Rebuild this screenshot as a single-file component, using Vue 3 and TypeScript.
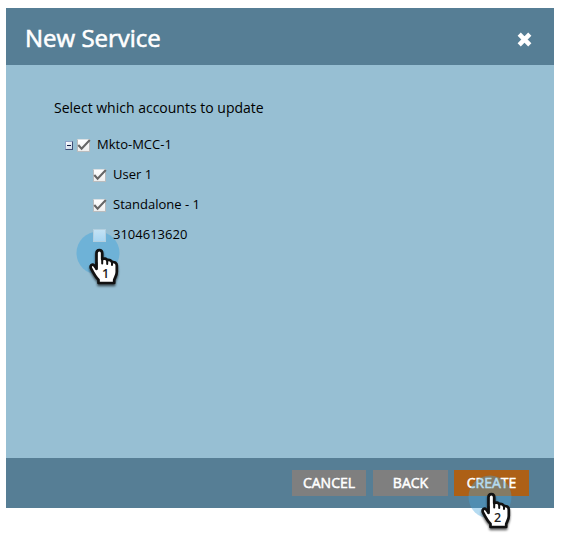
<script setup lang="ts">
import { ref } from 'vue'

interface Account {
  name: string
  checked: boolean
}

const root = ref<Account>({ name: 'Mkto-MCC-1', checked: true })
const accounts = ref<Account[]>([
  { name: 'User 1', checked: true },
  { name: 'Standalone - 1', checked: true },
  { name: '3104613620', checked: false },
])
const steps = [1, 2]
</script>

<template>
  <main class="page">
    <section class="dialog">
      <header class="head">
        <h1>New Service</h1>
        <svg class="close" viewBox="0 0 15 15" width="15" height="15">
          <path d="M2.2 2.2 12.8 12.8M12.8 2.2 2.2 12.8" />
        </svg>
      </header>

      <div class="body">
        <p class="prompt">Select which accounts to update</p>
        <div class="row root" @click="root.checked = !root.checked">
          <span class="toggle"></span>
          <span class="box">
            <svg v-if="root.checked" viewBox="0 0 15 15" width="15" height="15"><path d="M2.3 7 5.6 10.6 13.8 2" /></svg>
          </span>
          <span class="label">{{ root.name }}</span>
        </div>
        <div v-for="a in accounts" :key="a.name" class="row child" @click="a.checked = !a.checked">
          <span class="box" :class="{ empty: !a.checked }">
            <svg v-if="a.checked" viewBox="0 0 15 15" width="15" height="15"><path d="M2.3 7 5.6 10.6 13.8 2" /></svg>
          </span>
          <span class="label">{{ a.name }}</span>
        </div>
      </div>

      <footer class="foot">
        <button class="cancel"><span>CANCEL</span></button>
        <button class="back"><span>BACK</span></button>
        <button class="create"><span>CREATE</span></button>
      </footer>
    </section>

    <div v-for="n in steps" :key="n" class="pointer" :class="'p' + n">
      <svg viewBox="0 0 48 62" width="48" height="62">
        <circle cx="22" cy="22" r="21.5" />
        <path
          class="hand"
          d="M20.5 33V22.3C20.5 18 26.2 18 26.2 22.3V28.2C28 27 30.6 27.6 31.2 29.2C33.2 28.4 35.6 29.3 36 31.1C38.6 30.6 40.8 32 40.8 34.6V41C40.8 44.5 38.8 46.5 38.2 49V52H22.5V48.8C19.7 46.6 17.4 42 15 37.4C13.7 34.4 16.3 32.6 18.2 34.4L20.5 37.6Z"
        />
        <path class="crease" d="M26.2 27.5V32.4M31.2 29.5V33M36 31V34M20.5 32V38.3" />
        <text x="29.6" y="47.2">{{ n }}</text>
      </svg>
    </div>
  </main>
</template>

<style>
body {
  background: #fff;
}
</style>

<style scoped>
.page {
  position: relative;
  box-sizing: border-box;
  width: 563px;
  height: 534px;
  padding: 8px 9px 26px 6px;
  overflow: hidden;
  font-family: 'Open Sans', 'Noto Sans', sans-serif;
}
.dialog {
  display: flex;
  flex-direction: column;
  height: 500px;
  background: #97bfd3;
}
.head {
  display: flex;
  justify-content: space-between;
  align-items: center;
  box-sizing: border-box;
  height: 57px;
  padding: 0 22px 0 19px;
  background: #567e95;
}
h1 {
  margin: 0;
  padding-top: 3px;
  font-size: 24px;
  font-weight: 400;
  line-height: 32px;
  color: #fff;
  -webkit-text-stroke: 0.6px #fff;
}
.close {
  margin-top: 5px;
}
.close path {
  fill: none;
  stroke: #fff;
  stroke-width: 4.5;
}
.body {
  flex: 1;
  padding: 33px 0 0 48px;
}
.prompt {
  margin: 0;
  font-size: 14px;
  line-height: 20px;
  color: #000;
}
.row {
  display: flex;
  align-items: center;
  height: 30px;
}
.root {
  margin-top: 11px;
  padding-left: 11px;
}
.child {
  padding-left: 39px;
}
.toggle {
  display: flex;
  align-items: center;
  justify-content: center;
  box-sizing: border-box;
  width: 8px;
  height: 9px;
  margin: 2px 4px 0 0;
  border: 1px solid #8fa3c8;
  border-right-color: #405078;
  border-bottom-color: #405078;
  background: linear-gradient(135deg, #fff, #c9d6e6);
}
.toggle::before {
  content: '';
  width: 4px;
  height: 1px;
  background: #18224a;
}
.box {
  box-sizing: border-box;
  width: 13px;
  height: 13px;
  margin-top: 3px;
  border: 1px solid #b9bcbe;
  border-top-color: #dde2e5;
  background: linear-gradient(#fff, #eee);
}
.box svg {
  display: block;
  margin: -2px 0 0 -2px;
}
.box path {
  fill: none;
  stroke: #666;
  stroke-width: 2.1;
}
.box.empty {
  position: relative;
  z-index: 2;
  border-color: #b3cfdf;
  background: linear-gradient(#c3e2f4, #a9d6f2);
}
.label {
  margin-left: 7px;
  font-size: 13px;
  line-height: 20px;
  color: #000;
  white-space: nowrap;
}
.foot {
  display: flex;
  box-sizing: border-box;
  height: 50px;
  padding: 12px 25px 12px 286px;
  background: #567e95;
}
button {
  width: 75px;
  height: 26px;
  padding: 0;
  border: 0;
  background: #7f7f7f;
  color: #fff;
  font: 400 14px/26px 'Open Sans', 'Noto Sans', sans-serif;
  -webkit-text-stroke: 0.5px #fff;
}
.cancel {
  width: 74px;
  margin-right: 7px;
}
.back {
  margin-right: 6px;
}
.create {
  background: #ad6016;
}
.pointer {
  position: absolute;
  width: 48px;
  height: 62px;
}
.pointer svg {
  display: block;
}
.p1 {
  left: 76px;
  top: 231px;
}
.p2 {
  left: 468px;
  top: 475px;
}
circle {
  fill: #45a5dc;
  fill-opacity: 0.5;
}
.p2 circle {
  fill-opacity: 0.4;
}
.hand {
  fill: #fff;
  stroke: #111;
  stroke-width: 2.7;
  stroke-linejoin: round;
  filter: drop-shadow(0.5px 2px 1.3px rgba(0, 0, 0, 0.6));
}
.crease {
  fill: none;
  stroke: #111;
  stroke-width: 2;
  stroke-linecap: round;
}
text {
  font-family: 'Open Sans', sans-serif;
  font-size: 12.5px;
  font-weight: 600;
  text-anchor: middle;
  fill: #222;
}
</style>
